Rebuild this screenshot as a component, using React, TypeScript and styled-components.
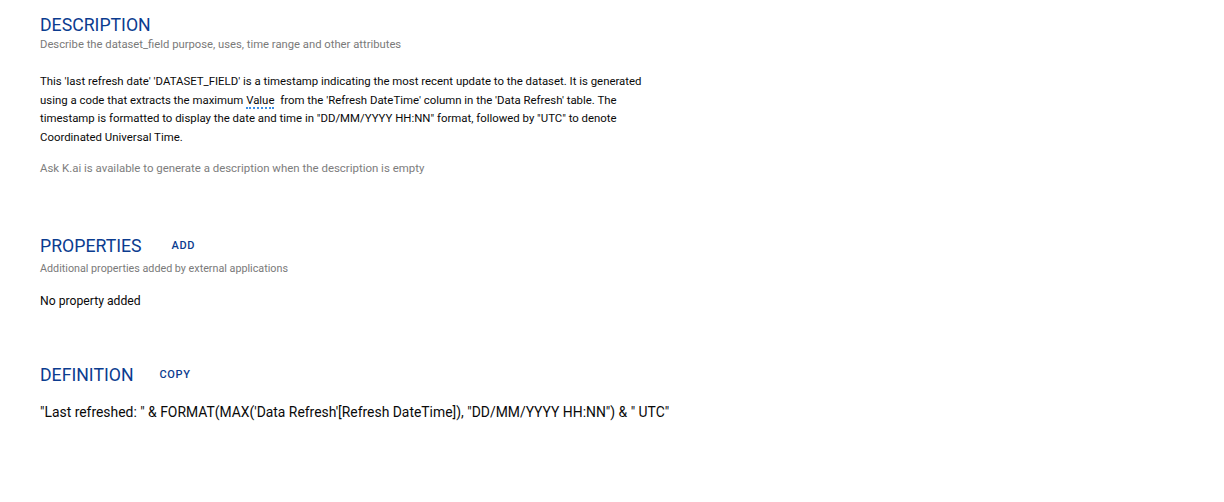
import React from "react";
import styled, {createGlobalStyle} from "styled-components";

const GlobalStyle = createGlobalStyle`
  html, body {
    margin: 0;
    padding: 0;
    background: #fff;
  }

  body {
    font-family: Roboto, "Liberation Sans", Arial, sans-serif;
    color: #000;
  }
`;

const Page = styled.div`
  padding: 13px 40px 0 40px;
  display: flex;
  flex-direction: column;
`;

const Section = styled.section<{ $top?: number }>`
  display: flex;
  flex-direction: column;
  margin-top: ${p => p.$top ?? 0}px;
`;

const Header = styled.div`
  display: flex;
  align-items: center;
  height: 24px;
`;

const Title = styled.h2`
  margin: 0;
  font-size: 17.7px;
  line-height: 24px;
  font-weight: 400;
  color: #0b3c8f;
`;

const TextButton = styled.button<{ $gap: number }>`
  margin-left: ${p => p.$gap}px;
  padding: 0 4px;
  border: none;
  background: none;
  font-family: inherit;
  font-size: 11px;
  font-weight: 500;
  letter-spacing: 0.6px;
  line-height: 24px;
  color: #0b3c8f;
  cursor: pointer;
`;

const Subtitle = styled.div<{ $top?: number; $size?: number }>`
  margin-top: ${p => p.$top ?? 0}px;
  font-size: ${p => p.$size ?? 11.25}px;
  line-height: 16px;
  color: #7a7a7a;
`;

const Body = styled.p`
  margin: 19px 0 0 0;
  max-width: 606px;
  font-size: 11.4px;
  line-height: 18.67px;
  color: #0a0a0a;
`;

const Term = styled.span`
  margin-right: 3px;
  border-bottom: 2px dotted #3a8ee6;
`;

const Hint = styled.div`
  margin-top: 12px;
  font-size: 11.45px;
  line-height: 18.67px;
  color: #7d7d7d;
`;

const Empty = styled.div`
  margin-top: 15px;
  font-size: 12.2px;
  line-height: 18.67px;
  color: #0a0a0a;
`;

const Formula = styled.div`
  margin-top: 15px;
  font-size: 13.9px;
  line-height: 20px;
  color: #0a0a0a;
`;

export default function App() {
    return <>
        <GlobalStyle/>
        <Page>
            <Section>
                <Header>
                    <Title>DESCRIPTION</Title>
                </Header>
                <Subtitle>Describe the dataset_field purpose, uses, time range and other attributes</Subtitle>
                <Body>
                    This 'last refresh date' 'DATASET_FIELD' is a timestamp indicating the most recent update to the
                    dataset. It is generated using a code that extracts the maximum <Term>Value</Term> from the
                    'Refresh DateTime' column in the 'Data Refresh' table. The timestamp is formatted to display the
                    date and time in "DD/MM/YYYY HH:NN" format, followed by "UTC" to denote Coordinated Universal Time.
                </Body>
                <Hint>Ask K.ai is available to generate a description when the description is empty</Hint>
            </Section>

            <Section $top={57}>
                <Header>
                    <Title>PROPERTIES</Title>
                    <TextButton $gap={26}>ADD</TextButton>
                </Header>
                <Subtitle $top={3} $size={10.75}>Additional properties added by external applications</Subtitle>
                <Empty>No property added</Empty>
            </Section>

            <Section $top={52}>
                <Header>
                    <Title>DEFINITION</Title>
                    <TextButton $gap={22}>COPY</TextButton>
                </Header>
                <Formula>"Last refreshed: " &amp; FORMAT(MAX('Data Refresh'[Refresh DateTime]), "DD/MM/YYYY HH:NN") &amp; " UTC"</Formula>
            </Section>
        </Page>
    </>;
}
